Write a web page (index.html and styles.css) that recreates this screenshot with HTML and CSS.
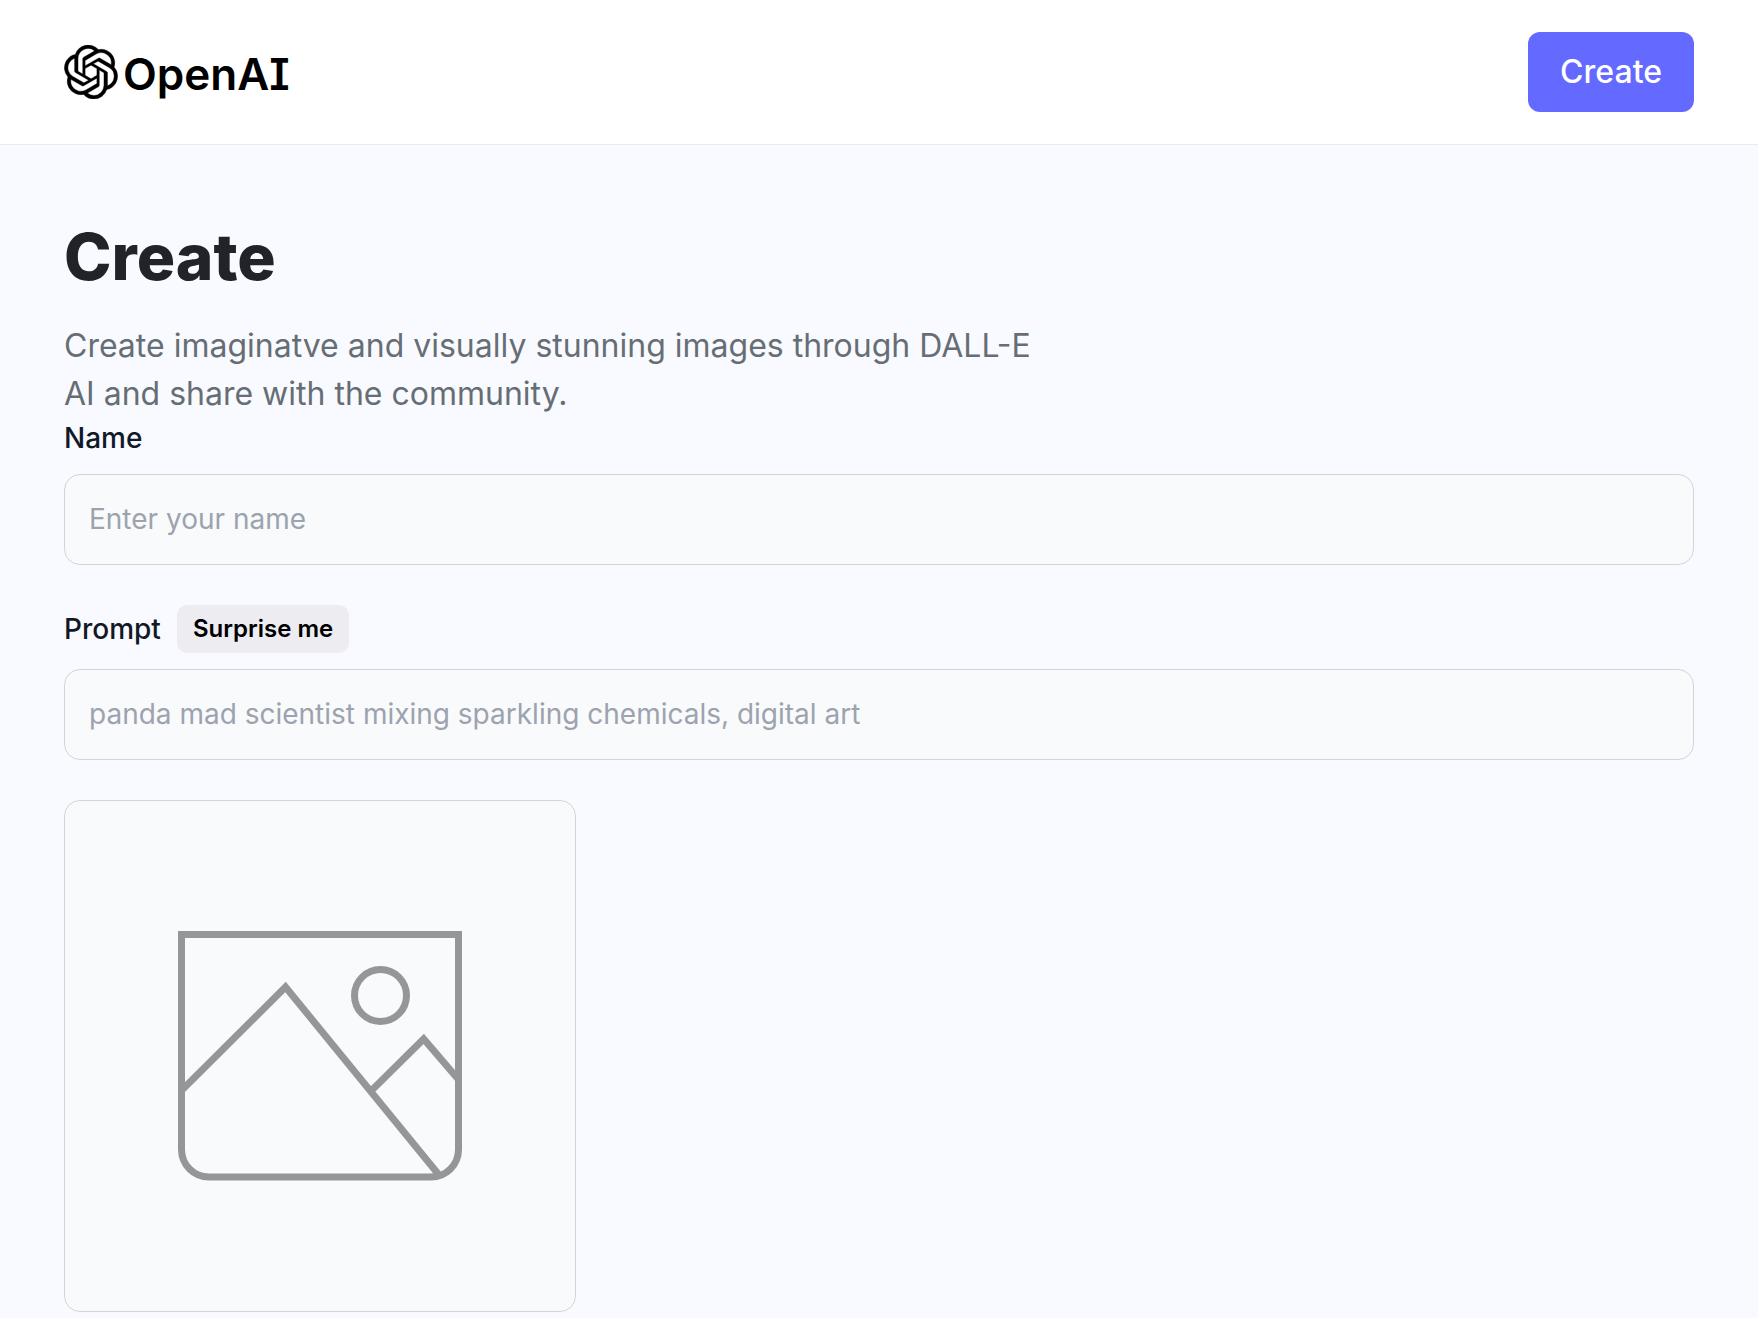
FILE: index.html
```html
<!DOCTYPE html>
<html lang="en">
<head>
<meta charset="utf-8">
<meta name="viewport" content="width=device-width, initial-scale=1">
<title>Create</title>
<link rel="stylesheet" href="styles.css">
</head>
<body>
<header class="header">
  <a class="logo" href="#">
    <svg class="logo-mark" viewBox="0 0 24 24" aria-hidden="true"><path d="M22.2819 9.8211a5.9847 5.9847 0 0 0-.5157-4.9108 6.0462 6.0462 0 0 0-6.5098-2.9A6.0651 6.0651 0 0 0 4.9807 4.1818a5.9847 5.9847 0 0 0-3.9977 2.9 6.0462 6.0462 0 0 0 .7427 7.0966 5.98 5.98 0 0 0 .511 4.9107 6.051 6.051 0 0 0 6.5146 2.9001A5.9847 5.9847 0 0 0 13.2599 24a6.0557 6.0557 0 0 0 5.7718-4.2058 5.9894 5.9894 0 0 0 3.9977-2.9001 6.0557 6.0557 0 0 0-.7475-7.073zm-9.022 12.6081a4.4755 4.4755 0 0 1-2.8764-1.0408l.1419-.0804 4.7783-2.7582a.7948.7948 0 0 0 .3927-.6813v-6.7369l2.02 1.1686a.071.071 0 0 1 .038.052v5.5826a4.504 4.504 0 0 1-4.4945 4.4944zm-9.6607-4.1254a4.4708 4.4708 0 0 1-.5346-3.0137l.142.0852 4.783 2.7582a.7712.7712 0 0 0 .7806 0l5.8428-3.3685v2.3324a.0804.0804 0 0 1-.0332.0615L9.74 19.9502a4.4992 4.4992 0 0 1-6.1408-1.6464zM2.3408 7.8956a4.485 4.485 0 0 1 2.3655-1.9728V11.6a.7664.7664 0 0 0 .3879.6765l5.8144 3.3543-2.0201 1.1685a.0757.0757 0 0 1-.071 0l-4.8303-2.7865A4.504 4.504 0 0 1 2.3408 7.872zm16.5963 3.8558L13.1038 8.364 15.1192 7.2a.0757.0757 0 0 1 .071 0l4.8303 2.7913a4.4944 4.4944 0 0 1-.6765 8.1042v-5.6772a.79.79 0 0 0-.407-.667zm2.0107-3.0231l-.142-.0852-4.7735-2.7818a.7759.7759 0 0 0-.7854 0L9.409 9.2297V6.8974a.0662.0662 0 0 1 .0284-.0615l4.8303-2.7866a4.4992 4.4992 0 0 1 6.6802 4.66zM8.3065 12.863l-2.02-1.1638a.0804.0804 0 0 1-.038-.0567V6.0742a4.4992 4.4992 0 0 1 7.3757-3.4537l-.142.0805L8.704 5.459a.7948.7948 0 0 0-.3927.6813zm1.0976-2.3654l2.602-1.4998 2.6069 1.4998v2.9994l-2.5974 1.4997-2.6067-1.4997Z" stroke="#000" stroke-width=".15"/></svg>
    <span class="logo-text">OpenAI</span>
  </a>
  <a class="create-link" href="#create">Create</a>
</header>
<main class="main" id="create">
  <h1 class="title">Create</h1>
  <p class="intro">Create imaginatve and visually stunning images through DALL-E AI and share with the community.</p>
  <form class="form">
    <div class="field">
      <div class="field-head"><label class="label" for="name">Name</label></div>
      <input class="input" id="name" type="text" placeholder="Enter your name">
    </div>
    <div class="field">
      <div class="field-head">
        <label class="label" for="prompt">Prompt</label>
        <button class="surprise" type="button">Surprise me</button>
      </div>
      <input class="input" id="prompt" type="text" placeholder="panda mad scientist mixing sparkling chemicals, digital art">
    </div>
    <div class="preview">
      <svg class="preview-icon" viewBox="0 0 384 384" role="img" aria-label="Preview">
        <g fill="none" stroke="#959698" stroke-width="7">
          <path d="M53.5 70.5H330.5V285.5A27.5 27.5 0 0 1 303 313H81A27.5 27.5 0 0 1 53.5 285.5Z"/>
          <path d="M55 225L157.5 123L311 311"/>
          <path d="M243 227L295.7 175L330 215"/>
          <circle cx="252.5" cy="131.5" r="26"/>
        </g>
      </svg>
    </div>
  </form>
</main>
</body>
</html>
```
FILE: styles.css
```css
* {
  box-sizing: border-box;
}

body {
  margin: 0;
  background: #f9faff;
  font-family: Inter, "Liberation Sans", sans-serif;
}

.header {
  display: flex;
  justify-content: space-between;
  align-items: center;
  padding: 32px 64px;
  background: #fff;
  border-bottom: 1px solid #e6ebf4;
}

.logo {
  display: flex;
  align-items: center;
  gap: 5px;
  color: #000;
  text-decoration: none;
}

.logo-mark {
  width: 54px;
  height: 54px;
}

.logo-text {
  padding-top: 4px;
  font-size: 44px;
  font-weight: 600;
  line-height: 48px;
  font-feature-settings: "cv08";
}

.create-link {
  padding: 16px 32px;
  border-radius: 12px;
  background: #6469ff;
  color: #fff;
  font-size: 32px;
  font-weight: 500;
  line-height: 48px;
  text-decoration: none;
}

.main {
  padding: 64px;
}

.title {
  margin: 0;
  color: #222328;
  font-size: 64px;
  font-weight: 800;
  line-height: 96px;
}

.intro {
  max-width: 1000px;
  margin: 17px 0 0;
  color: #666e75;
  font-size: 32px;
  line-height: 48px;
}

.form {
  display: flex;
  flex-direction: column;
  gap: 40px;
}

.field {
  display: flex;
  flex-direction: column;
  gap: 16px;
}

.field-head {
  display: flex;
  align-items: center;
  gap: 16px;
}

.label {
  color: #111827;
  font-size: 28px;
  font-weight: 500;
  line-height: 40px;
}

.surprise {
  padding: 8px 16px;
  border: 0;
  border-radius: 10px;
  background: #ececf1;
  color: #000;
  font: 600 24px/32px Inter, "Liberation Sans", sans-serif;
}

.input {
  width: 100%;
  padding: 24px;
  border: 1px solid #d1d5db;
  border-radius: 16px;
  background: #f9fafb;
  color: #111827;
  font: 400 28px/41px Inter, "Liberation Sans", sans-serif;
}

.input::placeholder {
  color: #9ca3af;
  opacity: 1;
}

.preview {
  display: flex;
  align-items: center;
  justify-content: center;
  width: 512px;
  max-width: 100%;
  aspect-ratio: 1;
  border: 1px solid #d1d5db;
  border-radius: 16px;
  background: #f9fafb;
}

.preview-icon {
  width: 384px;
  max-width: 100%;
}
```
